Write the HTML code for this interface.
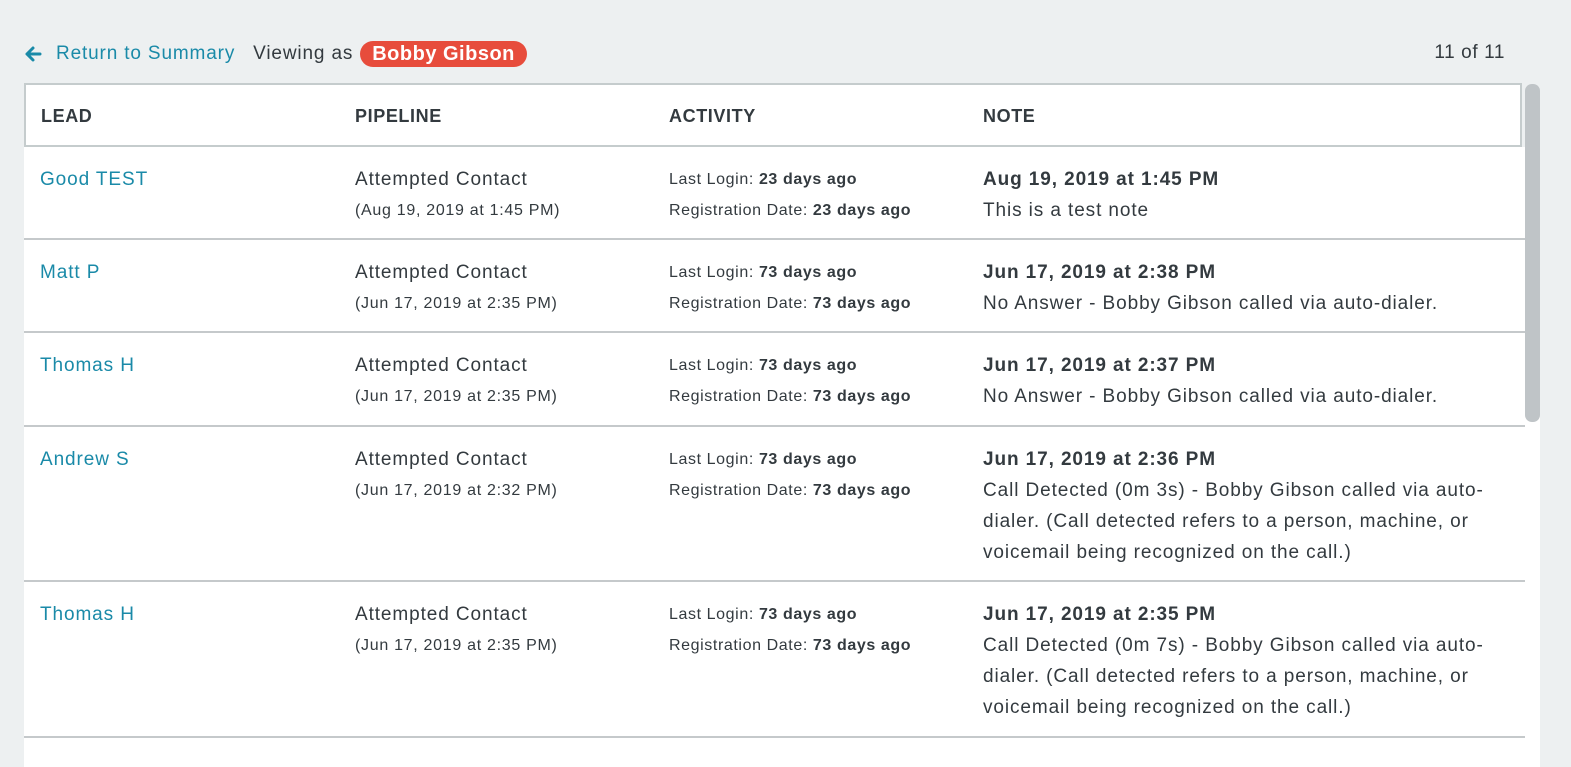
<!DOCTYPE html>
<html><head><meta charset="utf-8"><style>
*{margin:0;padding:0;box-sizing:border-box}
body{width:1571px;height:756px;background:#edf0f1;font-family:"Liberation Sans",sans-serif;color:#333a3f;position:relative;overflow:hidden}
.top{position:absolute;top:41px;left:24px;height:26px;display:flex;align-items:center;font-size:19px;letter-spacing:0.85px;white-space:nowrap}
.link{color:#1a8aa8}
.badge{background:#e74c3c;color:#fff;font-weight:bold;border-radius:13px;padding:1px 12px;font-size:20px;letter-spacing:0.5px;margin-left:7px;line-height:24px}
.count{position:absolute;top:42px;right:66px;font-size:19px;letter-spacing:0.6px}
.hdr{position:absolute;left:24px;top:83px;width:1498px;height:64px;background:#fff;border:2px solid #c5cccd}
.hdr div{position:absolute;top:21px;font-weight:bold;font-size:18px;letter-spacing:0.6px}
.body{position:absolute;left:24px;top:147px;width:1516px;height:620px;background:#fff}
.thumb{position:absolute;left:1525px;top:84px;width:15px;height:338px;background:#bfc4c7;border-radius:7px}
.line{position:absolute;left:24px;width:1501px;height:2px;background:#c5c9cb}
.c{position:absolute;white-space:nowrap;line-height:31px}
.lead{left:40px;color:#1a8aa8;font-size:19px;letter-spacing:0.9px}
.pipe{left:355px;font-size:19px;letter-spacing:0.9px}
.pipe small{font-size:16px;letter-spacing:0.7px;display:block}
.act{left:669px;font-size:16px;letter-spacing:0.6px}
.note{left:983px;font-size:19px;letter-spacing:0.9px}
</style></head><body>
<div class="top"><svg width="18" height="18" viewBox="0 0 18 18" style="margin-right:14px"><path d="M16 9H3M9 3L3 9l6 6" stroke="#1a8aa8" stroke-width="3" fill="none" stroke-linecap="round" stroke-linejoin="round"/></svg><span class="link">Return to Summary</span><span style="margin-left:18px">Viewing as</span><span class="badge">Bobby Gibson</span></div>
<div class="count">11 of 11</div>
<div class="body"></div>
<div class="hdr"><div style="left:15px">LEAD</div><div style="left:329px">PIPELINE</div><div style="left:643px">ACTIVITY</div><div style="left:957px">NOTE</div></div>
<div class="thumb"></div>

<div class="c lead" style="top:164px">Good TEST</div>
<div class="c pipe" style="top:164px">Attempted Contact<small>(Aug 19, 2019 at 1:45 PM)</small></div>
<div class="c act" style="top:164px">Last Login: <b>23 days ago</b><br>Registration Date: <b>23 days ago</b></div>
<div class="c note" style="top:164px"><b>Aug 19, 2019 at 1:45 PM</b><br>This is a test note</div>
<div class="line" style="top:238px"></div>

<div class="c lead" style="top:257px">Matt P</div>
<div class="c pipe" style="top:257px">Attempted Contact<small>(Jun 17, 2019 at 2:35 PM)</small></div>
<div class="c act" style="top:257px">Last Login: <b>73 days ago</b><br>Registration Date: <b>73 days ago</b></div>
<div class="c note" style="top:257px"><b>Jun 17, 2019 at 2:38 PM</b><br>No Answer - Bobby Gibson called via auto-dialer.</div>
<div class="line" style="top:331px"></div>

<div class="c lead" style="top:350px">Thomas H</div>
<div class="c pipe" style="top:350px">Attempted Contact<small>(Jun 17, 2019 at 2:35 PM)</small></div>
<div class="c act" style="top:350px">Last Login: <b>73 days ago</b><br>Registration Date: <b>73 days ago</b></div>
<div class="c note" style="top:350px"><b>Jun 17, 2019 at 2:37 PM</b><br>No Answer - Bobby Gibson called via auto-dialer.</div>
<div class="line" style="top:425px"></div>

<div class="c lead" style="top:444px">Andrew S</div>
<div class="c pipe" style="top:444px">Attempted Contact<small>(Jun 17, 2019 at 2:32 PM)</small></div>
<div class="c act" style="top:444px">Last Login: <b>73 days ago</b><br>Registration Date: <b>73 days ago</b></div>
<div class="c note" style="top:444px"><b>Jun 17, 2019 at 2:36 PM</b><br>Call Detected (0m 3s) - Bobby Gibson called via auto-<br>dialer. (Call detected refers to a person, machine, or<br>voicemail being recognized on the call.)</div>
<div class="line" style="top:580px"></div>

<div class="c lead" style="top:599px">Thomas H</div>
<div class="c pipe" style="top:599px">Attempted Contact<small>(Jun 17, 2019 at 2:35 PM)</small></div>
<div class="c act" style="top:599px">Last Login: <b>73 days ago</b><br>Registration Date: <b>73 days ago</b></div>
<div class="c note" style="top:599px"><b>Jun 17, 2019 at 2:35 PM</b><br>Call Detected (0m 7s) - Bobby Gibson called via auto-<br>dialer. (Call detected refers to a person, machine, or<br>voicemail being recognized on the call.)</div>
<div class="line" style="top:736px"></div>
</body></html>
